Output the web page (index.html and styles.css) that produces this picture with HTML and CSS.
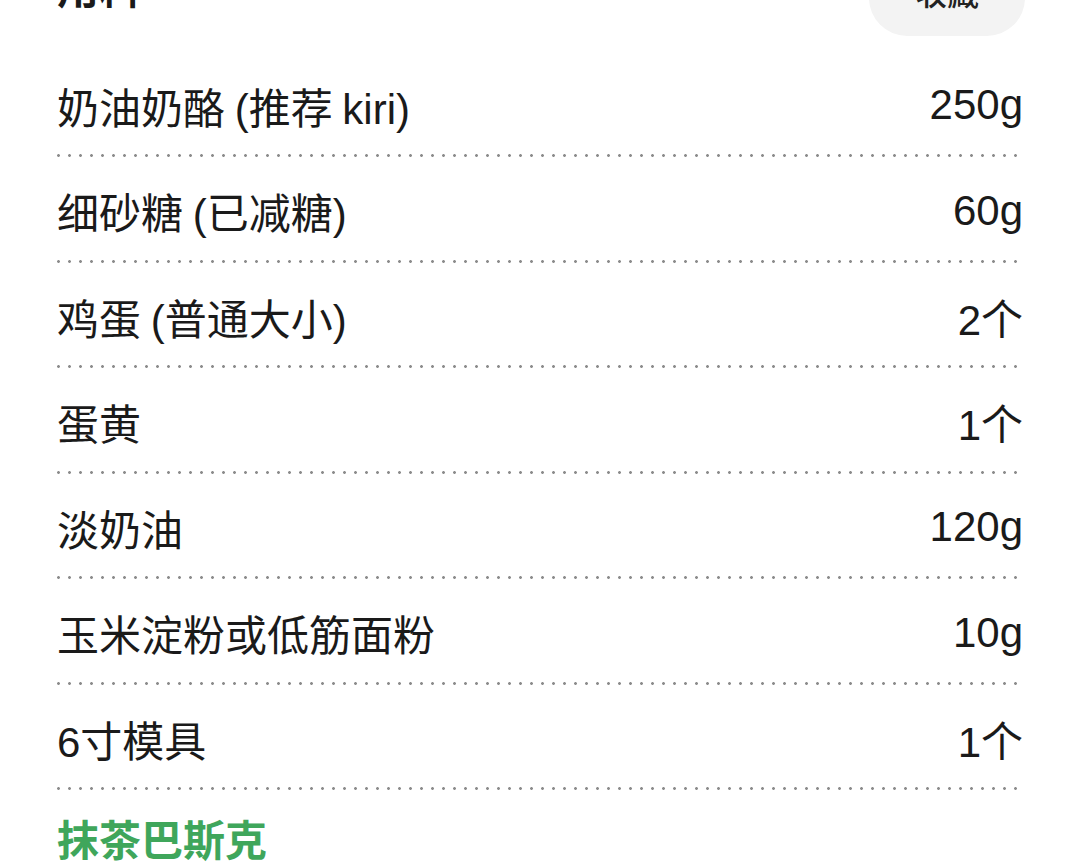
FILE: index.html
```html
<!DOCTYPE html>
<html lang="zh-CN">
<head>
<meta charset="utf-8">
<link rel="stylesheet" href="styles.css">
</head>
<body>
<div class="page">
  <div class="header">
    <h2 class="title">用料</h2>
    <button class="pill">收藏</button>
  </div>
  <ul class="list">
    <li class="row"><span class="name">奶油奶酪 (推荐 kiri)</span><span class="amt">250g</span></li>
    <li class="row"><span class="name">细砂糖 (已减糖)</span><span class="amt">60g</span></li>
    <li class="row"><span class="name">鸡蛋 (普通大小)</span><span class="amt">2个</span></li>
    <li class="row"><span class="name">蛋黄</span><span class="amt">1个</span></li>
    <li class="row"><span class="name">淡奶油</span><span class="amt">120g</span></li>
    <li class="row"><span class="name">玉米淀粉或低筋面粉</span><span class="amt">10g</span></li>
    <li class="row"><span class="name">6寸模具</span><span class="amt">1个</span></li>
  </ul>
  <h3 class="section">抹茶巴斯克</h3>
</div>
</body>
</html>
```
FILE: styles.css
```css
html, body {
  margin: 0;
  padding: 0;
  background: #ffffff;
}
body {
  font-family: "Liberation Sans", "Noto Sans CJK SC", sans-serif;
  color: #1a1a1a;
  overflow: hidden;
}
.page {
  padding: 0 57px;
}
.header {
  display: flex;
  justify-content: space-between;
  align-items: flex-start;
  margin-top: -40px;
  height: 91.5px;
}
.title {
  margin: 0;
  margin-top: 9px;
  font-size: 42px;
  line-height: 42px;
  font-weight: 700;
}
.pill {
  width: 156px;
  height: 76px;
  margin-right: -2px;
  border: none;
  border-radius: 38px;
  background: #f3f3f3;
  font-family: "Liberation Sans", "Noto Sans CJK SC", sans-serif;
  font-size: 32px;
  font-weight: 500;
  color: #222;
  padding: 0 0 14px;
}
.list {
  list-style: none;
  margin: 0;
  padding: 0;
}
.row {
  box-sizing: border-box;
  height: 105.5px;
  display: flex;
  justify-content: space-between;
  align-items: center;
  padding-top: 2px;
  font-size: 42px;
  background-image: radial-gradient(circle at 1.5px 1.5px, #8c8c8c 1.2px, transparent 1.6px);
  background-size: 11px 3px;
  background-repeat: repeat-x;
  background-position: 0 bottom;
}
.name {
  word-spacing: -2px;
}
.section {
  margin: 28px 0 0;
  font-size: 42px;
  line-height: 48px;
  font-weight: 700;
  color: #3fa65b;
}
```
